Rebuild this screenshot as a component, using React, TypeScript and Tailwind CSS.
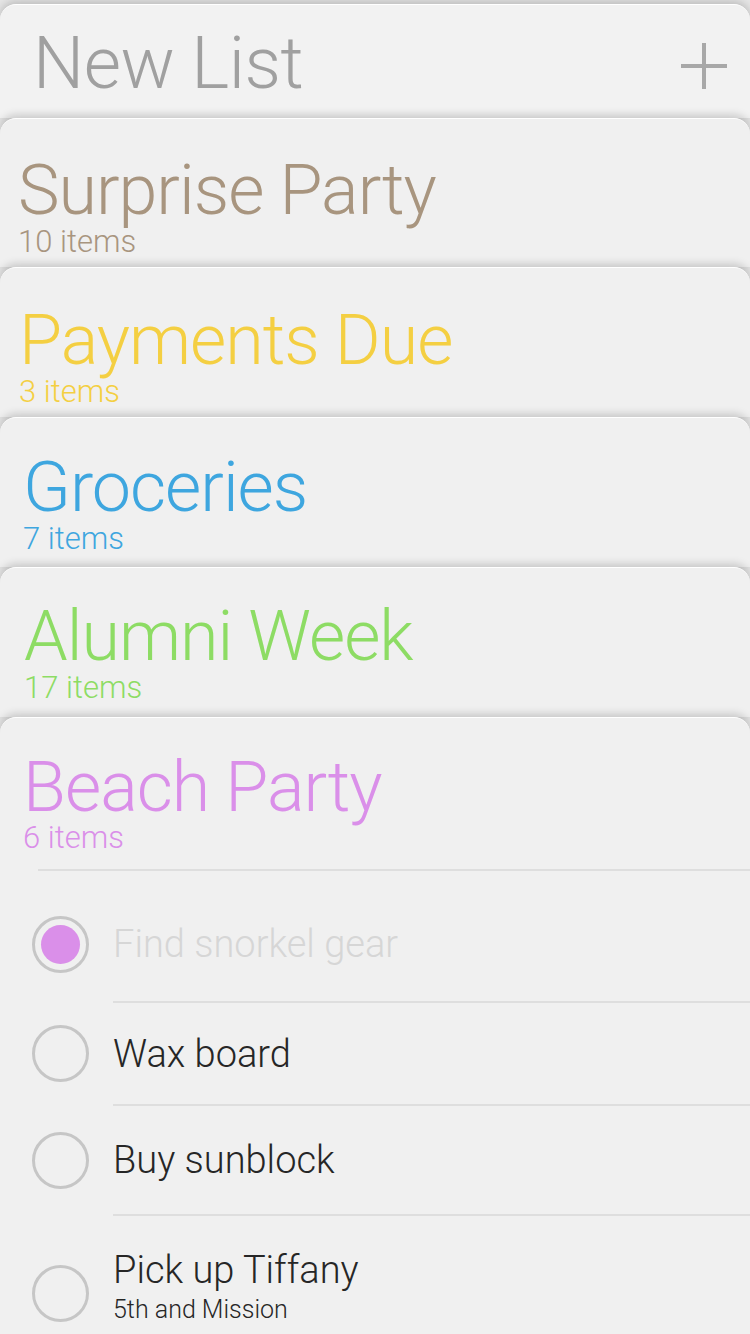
import React from 'react'

const LISTS = [
  { name: 'Surprise Party', count: '10 items', color: 'text-[#a8957f]', box: 'h-[149px] pl-[18px] pt-[36px]' },
  { name: 'Payments Due', count: '3 items', color: 'text-[#f4cf42]', box: 'h-[150px] pl-[19px] pt-[37px]' },
  { name: 'Groceries', count: '7 items', color: 'text-[#3ea6df]', box: 'h-[150px] pl-[23px] pt-[34px]' },
  { name: 'Alumni Week', count: '17 items', color: 'text-[#8ddc64]', box: 'h-[150px] pl-[24px] pt-[33px]' },
]

const font = { fontFamily: 'Roboto, "Noto Sans", sans-serif' }

function Circle({ done }: { done?: boolean }) {
  return (
    <div className="w-[57px] h-[57px] shrink-0 rounded-full border-[3px] border-[#c6c6c6] flex items-center justify-center">
      {done && <div className="w-[39px] h-[39px] rounded-full bg-[#da8fe9]" />}
    </div>
  )
}

export default function App() {
  return (
    <div className="w-[750px] h-[1334px] overflow-hidden bg-[#e6e6e6] pt-[4px] font-light" style={font}>
      {/* New list */}
      <div className="relative h-[114px] rounded-t-[16px] bg-[#f2f2f2] border-t border-white shadow-[0_-3px_8px_rgba(0,0,0,0.18)] flex items-start justify-between pl-[33px] pr-[22px] pt-[23px]">
        <span className="text-[72px] leading-[72px] text-[#a0a0a0] tracking-[-0.5px]">New List</span>
        <svg width="48" height="48" viewBox="0 0 48 48" className="mt-[14px]">
          <path d="M24 1V47M1 24H47" stroke="#a8a8a8" strokeWidth="4" />
        </svg>
      </div>

      {LISTS.map((l) => (
        <div
          key={l.name}
          className={`relative rounded-t-[16px] bg-[#f0f0f0] border-t border-white shadow-[0_-3px_8px_rgba(0,0,0,0.18)] ${l.box} ${l.color}`}
        >
          <div className="text-[70px] leading-[70px] tracking-[-1px]">{l.name}</div>
          <div className="text-[31px] leading-[31px] mt-[1px]">{l.count}</div>
        </div>
      ))}

      {/* Beach party, open */}
      <div className="relative h-[620px] rounded-t-[16px] bg-[#f0f0f0] border-t border-white shadow-[0_-3px_8px_rgba(0,0,0,0.18)]">
        <div className="pl-[23px] pt-[34px] text-[#da8fe9]">
          <div className="text-[70px] leading-[70px] tracking-[-1px]">Beach Party</div>
          <div className="text-[31px] leading-[31px]">6 items</div>
        </div>
        <div className="ml-[38px] mt-[16px] h-[2px] bg-[#dedede]" />

        <div className="flex items-center h-[130px] pl-[32px] pt-[16px]">
          <Circle done />
          <span className="ml-[24px] text-[38px] leading-[38px] text-[#d6d6d6]">Find snorkel gear</span>
        </div>
        <div className="ml-[113px] h-[2px] bg-[#dedede]" />

        <div className="flex items-center h-[101px] pl-[32px]">
          <Circle />
          <span className="ml-[24px] text-[38px] leading-[38px] text-[#262626]">Wax board</span>
        </div>
        <div className="ml-[113px] h-[2px] bg-[#dedede]" />

        <div className="flex items-center h-[108px] pl-[32px]">
          <Circle />
          <span className="ml-[24px] text-[38px] leading-[38px] text-[#262626]">Buy sunblock</span>
        </div>
        <div className="ml-[113px] h-[2px] bg-[#dedede]" />

        <div className="flex items-start pl-[32px] pt-[35px]">
          <div className="mt-[14px]">
            <Circle />
          </div>
          <div className="ml-[24px] text-[#262626]">
            <div className="text-[38px] leading-[38px]">Pick up Tiffany</div>
            <div className="text-[25px] leading-[25px] mt-[8px]">5th and Mission</div>
          </div>
        </div>
      </div>
    </div>
  )
}
